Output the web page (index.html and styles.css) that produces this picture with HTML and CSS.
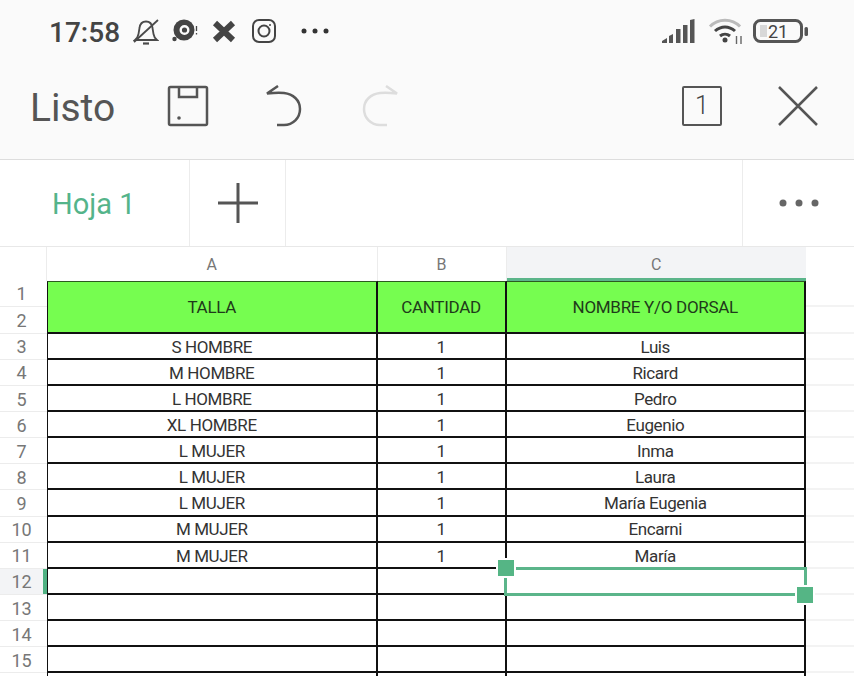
FILE: index.html
```html
<!DOCTYPE html>
<html lang="es">
<head>
    <meta charset="UTF-8">
    <title>Hoja 1</title>
    <link rel="stylesheet" href="styles.css">
</head>
<body>

    <div class="status-bar">
        <span class="clock">17:58</span>
        <svg class="ic-bell" width="26" height="27" viewBox="0 0 26 27" fill="none" stroke="#4a4a4a" stroke-width="1.8">
            <path d="M2 22c2-1.500 3-3 3.500-6l1-6C7 6 9.500 3.500 13 3.500S19 6 19.500 10l1 6c.5 3 1.500 4.500 3.500 6z"/>
            <path d="M1 24L25 2"/>
            <path d="M10 25.500h6" stroke-width="2.200"/>
        </svg>
        <svg class="ic-disc" width="26" height="26" viewBox="0 0 26 26">
            <circle cx="12" cy="12" r="10.500" fill="#444"/>
            <circle cx="12.500" cy="12" r="3.800" fill="none" stroke="#fafafa" stroke-width="2.400"/>
            <circle cx="2.500" cy="21" r="2.200" fill="#444"/>
            <path d="M24.500 8v5M24.500 15v1.500" stroke="#444" stroke-width="1.300"/>
        </svg>
        <svg class="ic-x" width="24" height="23" viewBox="0 0 24 23">
            <path d="M3 3l18 17M21 3L3 20" stroke="#444" stroke-width="6"/>
        </svg>
        <svg class="ic-insta" width="24" height="24" viewBox="0 0 24 24" fill="none" stroke="#444" stroke-width="2">
            <rect x="1" y="1" width="22" height="22" rx="6"/>
            <circle cx="12" cy="12" r="5.500"/>
            <circle cx="18" cy="6" r="1" fill="#444" stroke="none"/>
        </svg>
        <svg class="ic-dots" width="28" height="6" viewBox="0 0 28 6" fill="#333">
            <circle cx="3" cy="3" r="2.500"/>
            <circle cx="14" cy="3" r="2.500"/>
            <circle cx="25" cy="3" r="2.500"/>
        </svg>
        <div class="status-right">
            <svg width="33" height="24" viewBox="0 0 33 24" fill="#555">
                <path d="M0 24v-2l5-3v5zM7 24v-7l4-2v9zM14 24V10h4.500v14zM21 24V6h4.500v18zM28 24V1l4.500-1v24z"/>
            </svg>
            <svg class="ic-wifi" width="34" height="27" viewBox="0 0 34 27" fill="none" stroke-width="3">
                <path d="M2 8.500C10 0 24 0 32 8.500" stroke="#bbb"/>
                <path d="M7 13c6-5.500 14-5.500 20 0" stroke="#444"/>
                <path d="M12 18c3-2.500 7-2.500 10 0" stroke="#444"/>
                <circle cx="17" cy="22" r="2.500" fill="#444"/>
                <path d="M28.500 18v8M33 18v8" stroke="#666" stroke-width="1.400"/>
            </svg>
            <svg class="ic-battery" width="56" height="24" viewBox="0 0 56 24">
                <rect x="1.500" y="1.500" width="47" height="21" rx="6" fill="none" stroke="#555" stroke-width="3"/>
                <rect x="7" y="6" width="7" height="12" fill="#d8d8d8"/>
                <rect x="51.500" y="8" width="3.500" height="9" rx="1.500" fill="#555"/>
                <text x="25" y="18.500" text-anchor="middle" class="battery-text">21</text>
            </svg>
        </div>
    </div>

    <div class="toolbar">
        <span class="done">Listo</span>
        <svg class="ic-save" width="42" height="42" viewBox="0 0 42 42" fill="none" stroke="#555" stroke-width="2.500">
            <rect x="2" y="2" width="38" height="38" rx="1.500"/>
            <path d="M12 2v10h18V2"/>
            <circle cx="12" cy="33" r="1.800" fill="#555" stroke="none"/>
        </svg>
        <svg class="ic-undo" width="37" height="42" viewBox="0 0 37 42" fill="none" stroke="#555" stroke-width="2.500">
            <path d="M13 1L2 8.500c7-.8 13-1 17-.5 9 1 16 7 16 16S28 40 19 40h-7"/>
        </svg>
        <svg class="ic-redo" width="37" height="42" viewBox="0 0 37 42" fill="none" stroke="#ddd" stroke-width="2.500">
            <path d="M24 1l11 7.500c-7-.8-13-1-17-.5C9 9 2 15 2 24s7 16 16 16h7"/>
        </svg>
        <div class="toolbar-right">
            <div class="sheet-count">1</div>
            <svg class="ic-close" width="40" height="40" viewBox="0 0 40 40" stroke="#555" stroke-width="2.500">
                <path d="M1 1l38 38M39 1L1 39"/>
            </svg>
        </div>
    </div>

    <div class="tabs">
        <div class="tab active">Hoja 1</div>
        <div class="tab add">
            <svg width="42" height="42" viewBox="0 0 42 42" stroke="#555" stroke-width="3">
                <path d="M1 21h40M21 1v40"/>
            </svg>
        </div>
        <div class="tab-space"></div>
        <div class="tab more">
            <svg width="40" height="8" viewBox="0 0 40 8" fill="#666">
                <circle cx="4" cy="4" r="3.500"/>
                <circle cx="20" cy="4" r="3.500"/>
                <circle cx="36" cy="4" r="3.500"/>
            </svg>
        </div>
    </div>

    <div class="sheet">
        <!-- column headers -->
        <div class="col-head"></div>
        <div class="col-head">A</div>
        <div class="col-head">B</div>
        <div class="col-head selected">C</div>
        <div class="col-head blank"></div>

        <!-- rows 1 and 2 are merged -->
        <div class="row-head">1</div>
        <div class="cell title first">TALLA</div>
        <div class="cell title">CANTIDAD</div>
        <div class="cell title">NOMBRE Y/O DORSAL</div>
        <div class="extra"></div>
        <div class="row-head">2</div>
        <div class="extra"></div>

        <div class="row-head">3</div><div class="cell first">S HOMBRE</div><div class="cell">1</div><div class="cell">Luis</div><div class="extra"></div>
        <div class="row-head">4</div><div class="cell first">M HOMBRE</div><div class="cell">1</div><div class="cell">Ricard</div><div class="extra"></div>
        <div class="row-head">5</div><div class="cell first">L HOMBRE</div><div class="cell">1</div><div class="cell">Pedro</div><div class="extra"></div>
        <div class="row-head">6</div><div class="cell first">XL HOMBRE</div><div class="cell">1</div><div class="cell">Eugenio</div><div class="extra"></div>
        <div class="row-head">7</div><div class="cell first">L MUJER</div><div class="cell">1</div><div class="cell">Inma</div><div class="extra"></div>
        <div class="row-head">8</div><div class="cell first">L MUJER</div><div class="cell">1</div><div class="cell">Laura</div><div class="extra"></div>
        <div class="row-head">9</div><div class="cell first">L MUJER</div><div class="cell">1</div><div class="cell">María Eugenia</div><div class="extra"></div>
        <div class="row-head">10</div><div class="cell first">M MUJER</div><div class="cell">1</div><div class="cell">Encarni</div><div class="extra"></div>
        <div class="row-head">11</div><div class="cell first">M MUJER</div><div class="cell">1</div><div class="cell">María</div><div class="extra"></div>
        <div class="row-head current">12</div><div class="cell first"></div><div class="cell"></div><div class="cell"></div><div class="extra"></div>
        <div class="row-head">13</div><div class="cell first"></div><div class="cell"></div><div class="cell"></div><div class="extra"></div>
        <div class="row-head">14</div><div class="cell first"></div><div class="cell"></div><div class="cell"></div><div class="extra"></div>
        <div class="row-head">15</div><div class="cell first"></div><div class="cell"></div><div class="cell"></div><div class="extra"></div>
        <div class="row-head"></div><div class="cell first"></div><div class="cell"></div><div class="cell"></div><div class="extra"></div>

        <!-- selected cell, drawn over the grid -->
        <div class="selection">
            <span class="handle top-left"></span>
            <span class="handle bottom-right"></span>
        </div>
    </div>

</body>
</html>
```

FILE: styles.css
```css
body {
    margin: 0;
    height: 676px;
    overflow: hidden;
    background-color: #fff;
    font-family: Roboto, "Liberation Sans", sans-serif;
}

svg {
    display: block;
    flex-shrink: 0;
}

/* status bar */
.status-bar {
    display: flex;
    align-items: center;
    height: 62px;
    padding: 0 45px 0 49px;
    background-color: #fafafa;
}

.clock {
    padding-top: 2px;
    font-size: 28px;
    font-weight: 500;
    color: #444;
}

.ic-bell {
    margin-left: 13px;
}

.ic-disc {
    margin-left: 13px;
}

.ic-x {
    margin-left: 14px;
}

.ic-insta {
    margin-left: 16px;
}

.ic-dots {
    margin-left: 25px;
}

.status-right {
    display: flex;
    align-items: center;
    margin-left: auto;
}

.ic-wifi {
    margin-left: 13px;
}

.ic-battery {
    margin-left: 11px;
}

.battery-text {
    font-family: Roboto, sans-serif;
    font-size: 18px;
    fill: #444;
}

/* toolbar */
.toolbar {
    display: flex;
    align-items: center;
    height: 98px;
    padding: 0 36px 10px 30px;
    box-sizing: border-box;
    background-color: #fafafa;
    border-bottom: 1px solid #ddd;
}

.done {
    padding-top: 5px;
    font-size: 39px;
    color: #555;
}

.ic-save {
    margin-left: 52px;
}

.ic-undo {
    margin-left: 56px;
}

.ic-redo {
    margin-left: 60px;
}

.toolbar-right {
    display: flex;
    align-items: center;
    margin-left: auto;
}

.sheet-count {
    width: 36px;
    height: 36px;
    border: 2.500px solid #555;
    border-radius: 2px;
    text-align: center;
    font-size: 25px;
    font-weight: 300;
    line-height: 36px;
    color: #444;
}

.ic-close {
    margin-left: 56px;
}

/* sheet tabs */
.tabs {
    display: flex;
    height: 87px;
    box-sizing: border-box;
    border-bottom: 1px solid #e8e8e8;
}

.tab {
    display: flex;
    align-items: center;
    justify-content: center;
    flex-shrink: 0;
    box-sizing: border-box;
}

.tab.active {
    width: 190px;
    padding: 2px 0 0 52px;
    justify-content: flex-start;
    border-right: 1px solid #ececec;
    font-size: 29px;
    color: #54b48a;
}

.tab.add {
    width: 96px;
    border-right: 1px solid #ececec;
}

.tab-space {
    flex: 1;
}

.tab.more {
    width: 112px;
    border-left: 1px solid #ececec;
}

/* grid */
.sheet {
    position: relative;
    display: grid;
    grid-template-columns: 47px 330.500px 129px 299.500px 1fr;
    grid-template-rows: 33.500px 26.600px 26.600px repeat(14, 26.130px);
}

.col-head {
    display: flex;
    align-items: center;
    justify-content: center;
    box-sizing: border-box;
    padding-top: 2px;
    border-right: 1px solid #ececec;
    font-size: 16px;
    color: #777;
}

.col-head.selected {
    padding-top: 4px;
    background-color: #f3f4f6;
    border-bottom: 3px solid #5bb58a;
    border-right: none;
}

.col-head.blank {
    border-right: none;
}

.row-head {
    display: flex;
    align-items: center;
    justify-content: center;
    box-sizing: border-box;
    padding: 1px 4px 0 0;
    border-bottom: 1px solid #ececec;
    font-size: 18px;
    color: #777;
}

.row-head.current {
    background-color: #f3f4f6;
    box-shadow: inset -4px 0 0 #4fb182;
}

.cell {
    display: flex;
    align-items: center;
    justify-content: center;
    box-sizing: border-box;
    padding-top: 1.500px;
    border-right: 2px solid #111;
    border-bottom: 2px solid #111;
    font-size: 17px;
    letter-spacing: -0.400px;
    color: #333;
}

.cell.first {
    border-left: 1.500px solid #111;
}

.cell.title {
    grid-row: span 2;
    background-color: #76fd50;
    border-top: 1px solid #2c5a20;
    letter-spacing: -0.300px;
    color: #1f3a1a;
}

.extra {
    border-bottom: 2px solid #f3f3f3;
}

.selection {
    position: absolute;
    left: 504px;
    top: 320px;
    width: 297px;
    height: 23px;
    border: 3px solid #5bb58a;
}

.handle {
    position: absolute;
    width: 16px;
    height: 16px;
    border: 2px solid #fff;
    background-color: #55b585;
}

.handle.top-left {
    left: -11.500px;
    top: -12px;
}

.handle.bottom-right {
    right: -11px;
    bottom: -11.500px;
}
```
